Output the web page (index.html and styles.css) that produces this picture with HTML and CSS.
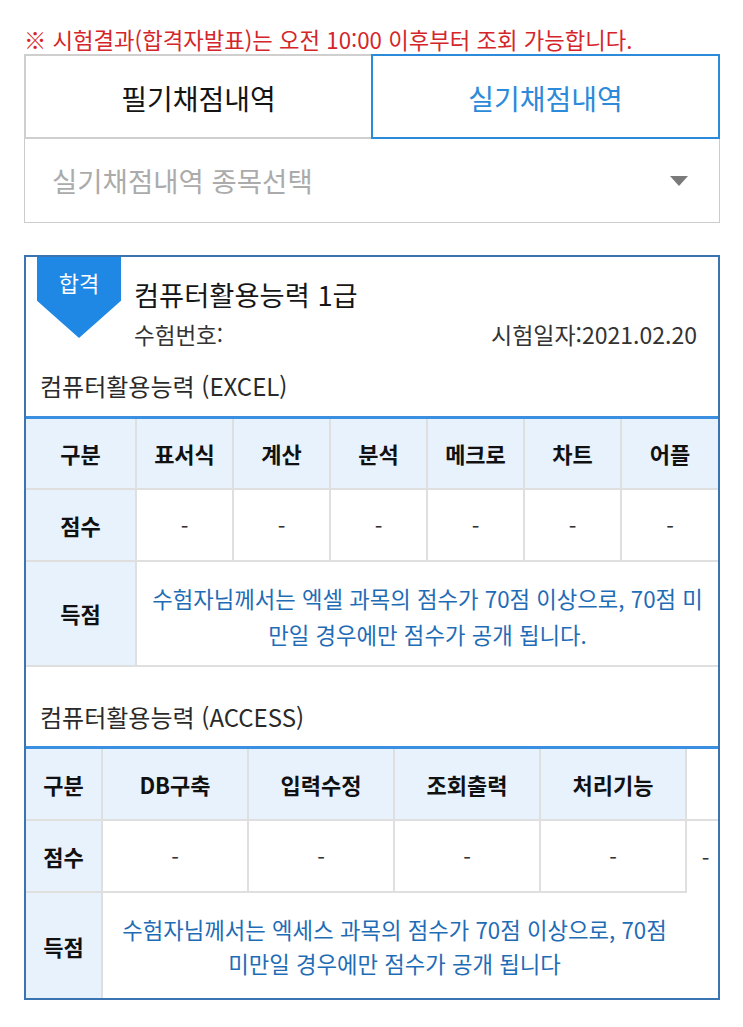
FILE: index.html
```html
<!DOCTYPE html>
<html lang="ko">
<head>
<meta charset="utf-8">
<title>실기채점내역</title>
<link rel="stylesheet" href="styles.css">
</head>
<body>
<div class="page">
  <p class="notice">※ 시험결과(합격자발표)는 오전 10:00 이후부터 조회 가능합니다.</p>
  <div class="tabs">
    <div class="tab">필기채점내역</div>
    <div class="tab active">실기채점내역</div>
  </div>
  <div class="select">
    <span class="placeholder">실기채점내역 종목선택</span>
    <span class="arrow"></span>
  </div>

  <div class="card">
    <div class="badge"><span>합격</span></div>
    <div class="card-head">
      <div class="title">컴퓨터활용능력 1급</div>
      <div class="meta">
        <span>수험번호:</span>
        <span>시험일자:2021.02.20</span>
      </div>
    </div>

    <div class="section-label first">컴퓨터활용능력 (EXCEL)</div>
    <table class="score excel">
      <colgroup>
        <col class="c-head"><col><col><col><col><col><col>
      </colgroup>
      <tr class="r-head">
        <th>구분</th><th>표서식</th><th>계산</th><th>분석</th><th>메크로</th><th>차트</th><th>어플</th>
      </tr>
      <tr class="r-score">
        <th>점수</th><td>-</td><td>-</td><td>-</td><td>-</td><td>-</td><td>-</td>
      </tr>
      <tr class="r-result">
        <th>득점</th>
        <td colspan="6" class="msg">수험자님께서는 엑셀 과목의 점수가 70점 이상으로, 70점 미<br>만일 경우에만 점수가 공개 됩니다.</td>
      </tr>
    </table>

    <div class="section-label second">컴퓨터활용능력 (ACCESS)</div>
    <table class="score access">
      <colgroup>
        <col class="a-head"><col class="a-col"><col class="a-col"><col class="a-col"><col class="a-col"><col class="a-last">
      </colgroup>
      <tr class="r-head">
        <th>구분</th><th>DB구축</th><th>입력수정</th><th>조회출력</th><th>처리기능</th><td class="blank-head"></td>
      </tr>
      <tr class="r-score">
        <th>점수</th><td>-</td><td>-</td><td>-</td><td>-</td><td class="blank-score">-</td>
      </tr>
      <tr class="r-result">
        <th>득점</th>
        <td colspan="4" class="msg open">수험자님께서는 엑세스 과목의 점수가 70점 이상으로, 70점<br>미만일 경우에만 점수가 공개 됩니다</td>
        <td class="blank-result"></td>
      </tr>
    </table>
  </div>
</div>
</body>
</html>
```

FILE: styles.css
```css
* { box-sizing: border-box; }

html, body {
  margin: 0;
  padding: 0;
  background: #ffffff;
}

body {
  font-family: "Noto Sans CJK KR", "Noto Sans", sans-serif;
  color: #222222;
}

.page {
  padding: 24px 23px 40px 24px;
}

.notice {
  margin: 0;
  font-size: 22.3px;
  line-height: 30px;
  color: #d4262a;
  white-space: nowrap;
}

.tabs {
  display: flex;
  height: 85px;
}

.tab {
  flex: 1 1 0;
  display: flex;
  align-items: center;
  justify-content: center;
  padding-top: 3px;
  font-size: 28px;
  color: #141414;
  border: 2px solid #cfcfcf;
  border-right: none;
}

.tab.active {
  color: #2b8ad9;
  border: 2px solid #2b8ad9;
}

.select {
  height: 84px;
  border: 1px solid #cccccc;
  border-top: none;
  display: flex;
  align-items: center;
  justify-content: space-between;
  padding: 0 31px 0 27px;
}

.placeholder {
  font-size: 27.5px;
  color: #ababab;
  margin-top: -2px;
}

.arrow {
  width: 0;
  height: 0;
  border-left: 9px solid transparent;
  border-right: 9px solid transparent;
  border-top: 10px solid #7a7a7a;
}

.card {
  position: relative;
  margin-top: 32px;
  border: 2px solid #3a74b1;
}

.badge {
  position: absolute;
  left: 11px;
  top: 0;
  width: 84px;
  height: 81px;
  background: #1f88e5;
  clip-path: polygon(0 0, 100% 0, 100% 54%, 50% 100%, 0 54%);
  display: flex;
  justify-content: center;
  padding-top: 10px;
}

.badge span {
  color: #ffffff;
  font-size: 22px;
  line-height: 30px;
}

.card-head {
  padding: 19px 21px 0 108px;
}

.title {
  font-size: 27.3px;
  line-height: 36px;
  color: #161616;
}

.meta {
  display: flex;
  justify-content: space-between;
  margin-top: 7px;
  font-size: 22.5px;
  line-height: 30px;
  color: #333333;
}

.meta span:last-child {
  font-size: 23px;
}

.section-label {
  font-size: 24px;
  line-height: 30px;
  color: #2a2a2a;
  padding-left: 14px;
}

.section-label.first {
  padding-top: 22px;
  padding-bottom: 15px;
}

.section-label.second {
  padding-top: 35px;
  padding-bottom: 14px;
}

.score {
  width: 100%;
  table-layout: fixed;
  border-collapse: collapse;
  border-top: 3px solid #3a8fe0;
}

.score th,
.score td {
  border: 2px solid #dfdfdf;
  text-align: center;
  font-size: 22px;
  padding: 0;
}

.score th {
  font-weight: 700;
  color: #111111;
  background: #e8f2fd;
}

.score td {
  color: #333333;
  background: #ffffff;
}

.score tr > :first-child { border-left: none; }
.score tr > :last-child { border-right: none; }

.excel .c-head { width: 110px; }

.r-head > * { height: 71px; }
.r-score > * { height: 72px; }
.r-result > * { height: 105px; }

.access .r-head > * { height: 73px; }

.score td.msg {
  color: #1f6cb6;
  font-size: 22.3px;
  line-height: 36px;
  padding: 6px 4px 0;
  white-space: nowrap;
}

.access td.msg.open {
  line-height: 34px;
  padding-top: 0;
}

.access .a-head { width: 76px; }
.access .a-col { width: 146px; }
.access .a-last { width: 32px; }

.access tr.r-result > * { height: 106px; border-bottom: none; }

.access td.blank-head {
  border-left: none;
  border-top: none;
}

.access td.blank-score {
  border-bottom: none;
  border-left: 2px solid #dfdfdf;
  padding-left: 6px;
}

.access td.msg.open {
  border-right: none;
}

.access td.blank-result {
  border: none;
}
```
